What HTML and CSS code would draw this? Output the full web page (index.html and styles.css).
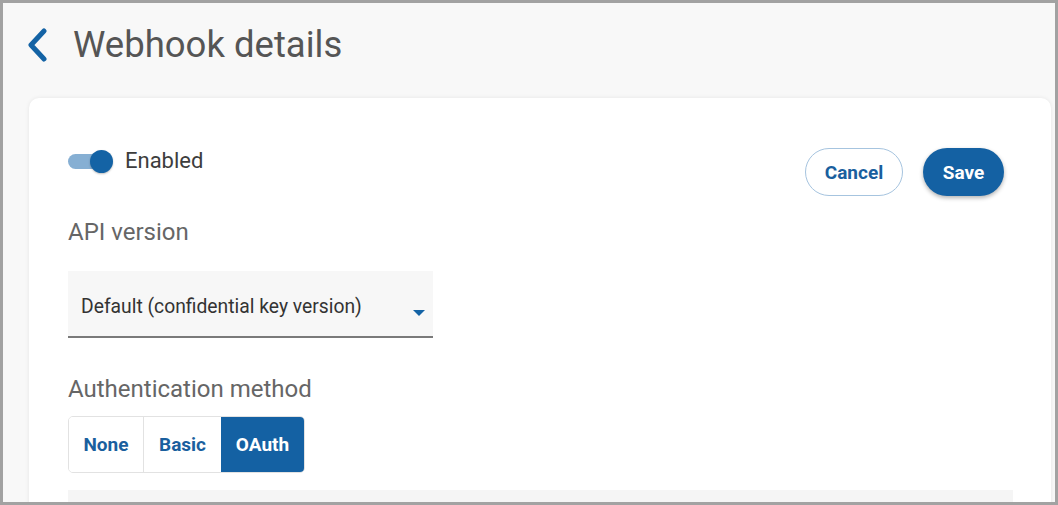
FILE: index.html
```html
<!DOCTYPE html>
<html>
<head>
<meta charset="utf-8">
<link rel="stylesheet" href="styles.css">
</head>
<body>
<div class="frame">
  <header class="page-header">
    <svg class="back" width="24" height="34" viewBox="0 0 24 34"><path d="M19 3 L6 17 L19 31" fill="none" stroke="#1463a5" stroke-width="5" stroke-linecap="round" stroke-linejoin="round"/></svg>
    <h1 class="title">Webhook details</h1>
  </header>
  <main class="card">
    <div class="top-row">
      <div class="toggle-row">
        <span class="toggle"><span class="track"></span><span class="knob"></span></span>
        <span class="toggle-label">Enabled</span>
      </div>
      <div class="actions">
        <button class="btn btn-outline">Cancel</button>
        <button class="btn btn-primary">Save</button>
      </div>
    </div>
    <div class="field-label api-label">API version</div>
    <div class="select">
      <span class="select-text">Default (confidential key version)</span>
      <svg class="caret" width="12" height="7" viewBox="0 0 12 7"><path d="M0 0 H12 L6 6 Z" fill="#1463a5"/></svg>
    </div>
    <div class="field-label auth-label">Authentication method</div>
    <div class="segmented">
      <button class="seg">None</button>
      <button class="seg">Basic</button>
      <button class="seg seg-active">OAuth</button>
    </div>
    <div class="panel"></div>
  </main>
</div>
</body>
</html>
```

FILE: styles.css
```css
* { box-sizing: border-box; }
html, body { margin: 0; padding: 0; }
body { font-family: Roboto, "Noto Sans", Arial, sans-serif; background: #fff; }
.frame {
  width: 1058px;
  height: 505px;
  border: 3px solid #a2a2a2;
  background: #f8f8f8;
  overflow: hidden;
  display: flex;
  flex-direction: column;
}
.page-header {
  flex: none;
  height: 95px;
  display: flex;
  align-items: center;
  padding-left: 22px;
  padding-bottom: 12px;
}
.back { display: block; margin-right: 24px; }
.title {
  margin: 0;
  font-size: 36.5px;
  line-height: 42px;
  font-weight: 400;
  color: #555;
}
.card {
  flex: none;
  margin-left: 26px;
  width: 1022px;
  background: #fff;
  border-radius: 10px 10px 0 0;
  box-shadow: 0 0 4px rgba(0,0,0,0.08);
  padding: 50px 47px 0 39px;
  display: flex;
  flex-direction: column;
}
.top-row {
  display: flex;
  justify-content: space-between;
  align-items: flex-start;
}
.toggle-row {
  display: flex;
  align-items: center;
  margin-top: 0;
  height: 26px;
}
.toggle { position: relative; width: 36px; height: 23px; display: block; margin-right: 21px; }
.track {
  position: absolute; left: 0; top: 4px; width: 32px; height: 15px;
  border-radius: 8px; background: #86afd3;
}
.knob {
  position: absolute; left: 22px; top: 0; width: 23px; height: 23px;
  border-radius: 50%; background: #1463a5;
  box-shadow: 0 1px 2px rgba(0,0,0,0.25);
}
.toggle-label { font-size: 22px; line-height: 26px; color: #3d3d3d; }
.actions { display: flex; gap: 20px; }
.btn {
  height: 48px;
  border-radius: 24px;
  font-family: Roboto, Arial, sans-serif;
  font-size: 19px;
  font-weight: 700;
  cursor: pointer;
  padding: 0;
}
.btn-outline {
  width: 98px;
  background: #fff;
  color: #1a5f9e;
  border: 1px solid #a6c4df;
}
.btn-primary {
  width: 81px;
  background: #1461a3;
  color: #fff;
  border: none;
  box-shadow: 0 2px 4px rgba(0,0,0,0.3);
}
.field-label {
  font-size: 24px;
  line-height: 28px;
  color: #666;
}
.api-label { margin-top: 22px; }
.select {
  margin-top: 25px;
  width: 365px;
  height: 67px;
  background: #f7f7f7;
  border-bottom: 2px solid #7a7a7a;
  display: flex;
  align-items: center;
  padding: 6px 8px 0 13px;
}
.select-text { font-size: 19.3px; color: #333; flex: 1; }
.caret { display: block; margin-top: 14px; }
.auth-label { margin-top: 37px; }
.segmented {
  margin-top: 13px;
  display: flex;
  width: 237px;
  height: 57px;
  border: 1px solid #e2e2e2;
  border-radius: 5px;
  overflow: hidden;
}
.seg {
  border: none;
  background: #fff;
  color: #1a5f9e;
  font-family: Roboto, Arial, sans-serif;
  font-size: 19px;
  font-weight: 700;
  padding: 0;
  height: 100%;
}
.seg:nth-child(1) { width: 75px; border-right: 1px solid #e2e2e2; }
.seg:nth-child(2) { width: 77px; }
.seg-active { flex: 1; background: #1461a3; color: #fff; }
.panel {
  margin-top: 17px;
  height: 40px;
  width: 945px;
  background: #f5f5f5;
}
```
